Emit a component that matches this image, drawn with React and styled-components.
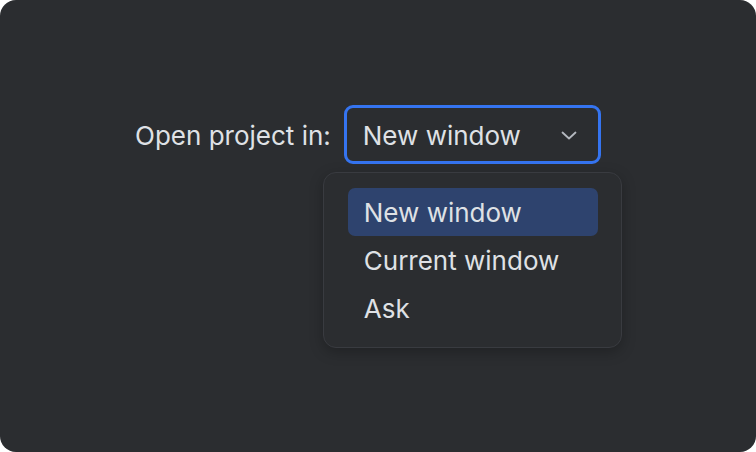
import React from "react";
import styled, { createGlobalStyle } from "styled-components";

const Global = createGlobalStyle`
  html, body { margin: 0; padding: 0; background: #ffffff; }
  body { font-family: Inter, "Noto Sans", sans-serif; }
`;

const Window = styled.div`
  width: 756px;
  height: 452px;
  box-sizing: border-box;
  background: #2b2d30;
  border-radius: 16px;
  padding: 105px 0 0 135px;
  color: #dfe1e5;
`;

const Row = styled.div`
  display: flex;
  align-items: center;
  gap: 13px;
`;

const Label = styled.span`
  font-size: 26px;
  line-height: 1;
  padding-top: 3px;
`;

const SelectWrap = styled.div`
  position: relative;
`;

const Select = styled.div`
  width: 257px;
  height: 59px;
  box-sizing: border-box;
  border: 3px solid #3574f0;
  border-radius: 9px;
  display: flex;
  align-items: center;
  justify-content: space-between;
  padding: 2px 20px 0 16px;
  font-size: 26px;
`;

const Popup = styled.div`
  position: absolute;
  left: -21px;
  top: 67px;
  width: 299px;
  box-sizing: border-box;
  padding: 15px 23px 15px 24px;
  background: #2b2d30;
  border: 1px solid #393b40;
  border-radius: 13px;
  box-shadow: 0 4px 14px rgba(0, 0, 0, 0.25);
`;

const Item = styled.div`
  height: 48px;
  display: flex;
  align-items: center;
  padding-left: 16px;
  border-radius: 7px;
  font-size: 26px;
  background: ${(p) => (p.$active ? "#2e436e" : "transparent")};
`;

const Chevron = () => (
  <svg width="18" height="12" viewBox="0 0 18 12" fill="none">
    <path d="M2.5 2.5 L9 8.5 L15.5 2.5" stroke="#b4b8bf" strokeWidth="1.8" strokeLinecap="round" strokeLinejoin="round" />
  </svg>
);

export default function App() {
  return (
    <>
      <Global />
      <Window>
        <Row>
          <Label>Open project in:</Label>
          <SelectWrap>
            <Select>
              <span>New window</span>
              <Chevron />
            </Select>
            <Popup>
              <Item $active>New window</Item>
              <Item>Current window</Item>
              <Item>Ask</Item>
            </Popup>
          </SelectWrap>
        </Row>
      </Window>
    </>
  );
}
